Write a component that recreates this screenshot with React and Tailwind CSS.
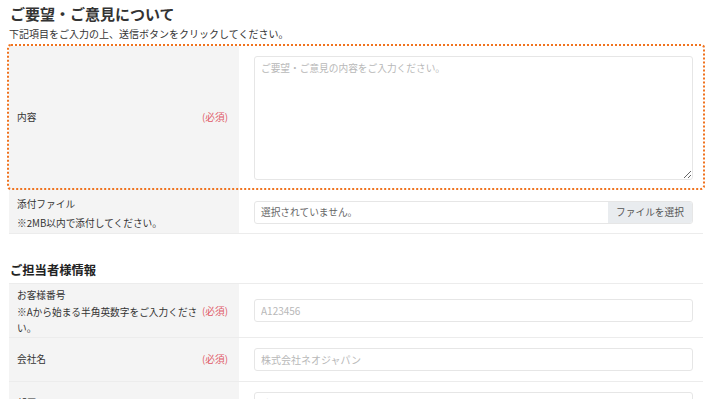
import React from "react";

const FONT = "font-['Meiryo','Noto_Sans_CJK_JP','Noto_Sans',sans-serif]";

function Required() {
  return <span className="shrink-0 text-[9.7px] text-[#e05a68]">(必須)</span>;
}

function TextInput({ placeholder }) {
  return (
    <input
      type="text"
      placeholder={placeholder}
      className="w-full h-[23px] rounded-[3px] border border-[#e6e6e6] px-[6px] text-[10px] text-[#333] placeholder:text-[#b8b8b8] outline-none"
    />
  );
}

function Row({ label, note, required, children, labelClass = "py-[10px]" }) {
  return (
    <div className="flex border-t border-[#ececec]">
      <div className={`w-[230px] shrink-0 bg-[#f4f4f4] pl-[8px] pr-[11px] flex items-center gap-1 ${labelClass}`}>
        <div className="flex-1 text-[9.7px] leading-[16.5px] text-[#333]">
          <div>{label}</div>
          {note && <div>{note}</div>}
        </div>
        {required && <Required />}
      </div>
      <div className="flex-1 pl-[15px] pr-[10px] py-[10px] flex items-center">{children}</div>
    </div>
  );
}

export default function App() {
  return (
    <div className={`w-[708px] h-[399px] overflow-hidden bg-white text-[#333] ${FONT}`}>
      <div className="pl-[9px] pr-[5px]">
        <h2 className="pl-[1px] pt-[5px] text-[15px] font-bold leading-[18px] text-[#333]">
          ご要望・ご意見について
        </h2>
        <p className="mt-[4px] text-[10px] leading-[14px] text-[#333]">
          下記項目をご入力の上、送信ボタンをクリックしてください。
        </p>

        {/* highlighted row */}
        <div className="mt-[5px] flex outline-2 outline-dotted outline-[#f0731f] rounded-[2px]">
          <div className="w-[230px] shrink-0 bg-[#f4f4f4] pl-[8px] pr-[11px] flex items-center">
            <span className="flex-1 text-[9.7px] text-[#333]">内容</span>
            <Required />
          </div>
          <div className="flex-1 pl-[15px] pr-[10px] pt-[10px] pb-[8px]">
            <textarea
              placeholder="ご要望・ご意見の内容をご入力ください。"
              className="block w-full h-[124px] rounded-[3px] border border-[#e6e6e6] px-[6px] py-[4px] text-[9.7px] leading-[14px] placeholder:text-[#b8b8b8] outline-none"
            />
          </div>
        </div>

        <div className="flex border-b border-[#ececec]">
          <div className="w-[230px] shrink-0 bg-[#f4f4f4] pl-[8px] pr-[11px] pt-[7px] pb-0 text-[9.7px] leading-[19px] text-[#333]">
            <div>添付ファイル</div>
            <div>※2MB以内で添付してください。</div>
          </div>
          <div className="flex-1 pl-[15px] pr-[10px] pt-[3px] flex items-center">
            <div className="flex w-full h-[23px] rounded-[3px] border border-[#e6e6e6] overflow-hidden text-[9.7px]">
              <span className="flex-1 px-[6px] flex items-center text-[#666]">選択されていません。</span>
              <span className="w-[84px] bg-[#e9ecef] flex items-center justify-center text-[#555]">ファイルを選択</span>
            </div>
          </div>
        </div>

        <h3 className="mt-[28px] pl-[1px] text-[12.3px] font-bold leading-[16px] text-[#222]">ご担当者様情報</h3>

        <div className="mt-[5px]">
          <Row
            label="お客様番号"
            note="※Aから始まる半角英数字をご入力ください。"
            required
            labelClass="pt-[3px] pb-0"
          >
            <TextInput placeholder="A123456" />
          </Row>
          <Row label="会社名" required>
            <TextInput placeholder="株式会社ネオジャパン" />
          </Row>
          <Row label="部署">
            <TextInput placeholder="情報システム部" />
          </Row>
        </div>
      </div>
    </div>
  );
}
